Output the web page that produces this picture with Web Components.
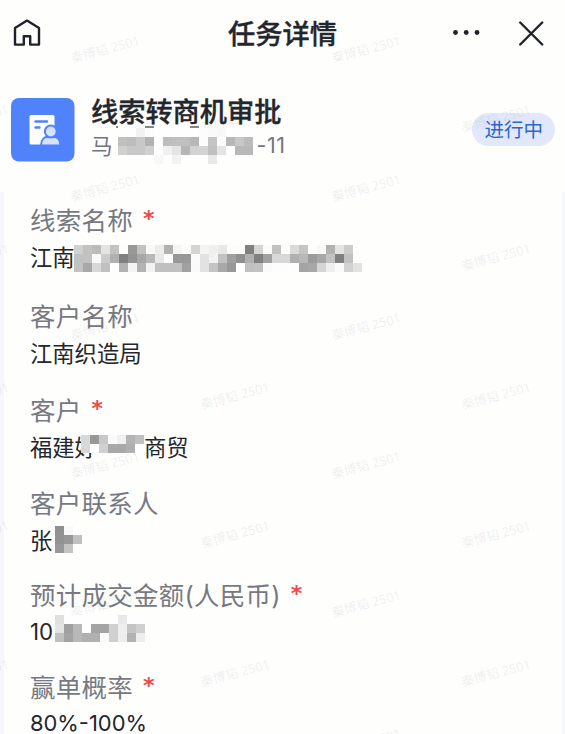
<!DOCTYPE html>
<html lang="zh-CN">
<head>
<meta charset="utf-8">
<title>任务详情</title>
<style>
  body {
    margin: 0;
    background: #fefefd;
    font-family: Inter, "Noto Sans CJK SC", sans-serif;
    color: #24262d;
  }
</style>
</head>
<body>
<task-page>
  <nav-bar slot="nav">任务详情</nav-bar>
  <task-summary slot="summary">
    线索转商机审批
    <span slot="sub">马</span>
    <pixel-mask slot="sub" style="margin: 3px 4px 0 5px" ticks="-2 27 72" rows="
      fe fe f2 fc fe fe fe fe fe fc fa f8 fe fe fe
      c0 bd c8 b2 fd bd c0 c0 b8 fc c4 fd b8 c8 bc
      d0 c8 c8 d0 fe f0 e4 b6 d2 d4 c0 e4 fe b8 b8
      fe fe fe fe f8 fe f2 fe fe fe e8 fe fe fe fe"></pixel-mask>
    <span slot="sub" style="letter-spacing: .5px">-11</span>
    <status-pill slot="status">进行中</status-pill>
  </task-summary>

  <form-field label="线索名称" required>
    江南<pixel-mask style="margin: 4px 0 0 -1px" rows="
      d2 c2 bb e4 c2 fd 98 c2 f8 ec b1 f5 fd d4 f4 f0 e8 fc fc 80 d5 fb c1 fc da c5 fe f8 b2 e4 cc fe
      c2 c2 f8 cc b2 80 94 a8 b8 e8 fc 98 98 fb e2 f2 c2 a0 90 b0 80 a0 d8 d8 b0 b8 9c a8 c2 80 c2 fe
      c2 a8 d8 c0 fe b2 f4 b2 f2 c0 c0 c0 a0 fa e2 c4 a8 98 fe c0 c2 fa fd fd fc a4 a8 d5 ee fa d2 e2"></pixel-mask>
  </form-field>
  <form-field label="客户名称">江南织造局</form-field>
  <form-field label="客户" required>
    福建好<pixel-mask style="margin: -4px 0 0 -16px" rows="
      d8 98 c8 fa f0 b4 c0
      d8 fe d0 a8 a8 b0 fe"></pixel-mask>商贸
  </form-field>
  <form-field label="客户联系人">
    张<pixel-mask style="margin-left: 3px" rows="
      90 f8 fe
      92 98 c0
      98 c4 fe"></pixel-mask>
  </form-field>
  <form-field label="预计成交金额(人民币)" required>
    10<pixel-mask style="margin: -5px 0 0 2px" rows="
      e0 fe fe fe fe fe fe e8 fe fe
      e4 a0 b8 fe a4 a4 d0 ee c4 d0
      c0 a4 b8 b0 b0 fa d0 ee b2 ee"></pixel-mask>
  </form-field>
  <form-field label="赢单概率" required><span style="font-size: 21.9px">80%-100%</span></form-field>
</task-page>

<script>
/** Attaches an open shadow root holding the given markup */
function render(el, html) {
  el.attachShadow({ mode: 'open' }).innerHTML = html;
}

/**
 * Page frame: bar, summary and the sheet with the fields
 */
class TaskPage extends HTMLElement {
  constructor() {
    super();
    render(this, `
    <style>
      :host {
        display: flex;
        flex-direction: column;
        position: relative;
        height: 734px;
        overflow: hidden;
      }

      .sheet {
        flex: 1;
        min-height: 0;
        overflow: hidden;
        box-sizing: border-box;
        padding: 10px 26px 0 26px;
        border: solid #f6f7fa;
        border-width: 0 3px 0 4.5px;
      }

      ::slotted(form-field) { height: 92px; }
      ::slotted(form-field:nth-of-type(1)) { height: 96px; }
      ::slotted(form-field:nth-of-type(2)) { height: 94px; }
      ::slotted(form-field:nth-of-type(3)) { height: 93px; }
    </style>
    <slot name="nav"></slot>
    <slot name="summary"></slot>
    <div class="sheet"><slot></slot></div>
    <water-mark text="秦博韬 2501"></water-mark>
    `);
  }
}

class NavBar extends HTMLElement {
  constructor() {
    super();
    render(this, `
    <style>
      :host {
        display: grid;
        grid-template-columns: 1fr auto 1fr;
        align-items: center;
        height: 65px;
        padding: 0 21px 1px 12px;
      }

      h1 {
        margin: 4px 0 0 9px;
        font-size: 27.3px;
        font-weight: 500;
        -webkit-text-stroke: .35px;
        line-height: 40px;
      }

      .actions {
        display: flex;
        justify-content: flex-end;
        align-items: center;
        gap: 37px;
      }

      svg {
        display: block;
        fill: none;
        stroke: #202229;
        stroke-width: 2.4;
        stroke-linejoin: round;
      }
    </style>
    <svg width="30" height="30" viewBox="0 0 30 30">
      <path d="M3 10 15 2.6 27 10V26.600H18.200V18.200H11.800V26.600H3Z"/>
    </svg>
    <h1><slot></slot></h1>
    <div class="actions">
      <svg width="28" height="8" viewBox="0 0 28 8">
        <g fill="#202229" stroke="none">
          <circle cx="2.5" cy="3.5" r="2.4"/>
          <circle cx="13.2" cy="3.5" r="2.4"/>
          <circle cx="24" cy="3.5" r="2.4"/>
        </g>
      </svg>
      <svg width="26" height="26" viewBox="0 0 26 26" stroke-linecap="round">
        <path d="M2.200 2.500 24.200 24.500M24.200 2.500 2.200 24.500"/>
      </svg>
    </div>
    `);
  }
}

class TaskSummary extends HTMLElement {
  constructor() {
    super();
    render(this, `
    <style>
      :host {
        display: flex;
        align-items: center;
        height: 126px;
        box-sizing: border-box;
        padding: 1px 10px 0 11px;
      }

      .app { flex: none; margin-right: 16px; }

      .text { flex: 1; }

      h2 {
        margin: 0;
        font-size: 27.2px;
        font-weight: 500;
        -webkit-text-stroke: .35px;
        line-height: 36px;
      }

      .sub {
        display: flex;
        align-items: center;
        height: 34px;
        margin-top: -3px;
        margin-bottom: 3px;
        font-size: 21.5px;
        color: #72747e;
      }
    </style>
    <svg class="app" width="64" height="64" viewBox="0 0 64 64">
      <rect width="63.5" height="63.5" rx="8" fill="#4f82fb"/>
      <path d="M20 17H42Q43.500 17 43.500 18.500V46.500H20Q18.500 46.500 18.500 45V18.500Q18.500 17 20 17Z" fill="#fff"/>
      <path d="M24.500 23.500H36M24.500 29.500H28.500" stroke="#4f82fb" stroke-width="2.400" stroke-linecap="round"/>
      <g fill="#d7e2ff" stroke="#4f82fb" stroke-width="2">
        <path d="M30 47.500C30 41.500 33.500 38.800 37 38.800H42.500C46.500 38.800 49.300 42 49.300 47.500Z"/>
        <circle cx="39.800" cy="33.500" r="5.900"/>
      </g>
    </svg>
    <div class="text">
      <h2><slot></slot></h2>
      <div class="sub"><slot name="sub"></slot></div>
    </div>
    <slot name="status"></slot>
    `);
  }
}

class StatusPill extends HTMLElement {
  constructor() {
    super();
    render(this, `
    <style>
      :host {
        display: block;
        height: 33px;
        padding: 0 12px;
        border-radius: 17px;
        background: #e1e8fc;
        color: #2c66ce;
        font-size: 19.500px;
        line-height: 35px;
      }
    </style>
    <slot></slot>
    `);
  }
}

/**
 * Label over value
 *
 * @property {string} label
 * @property {boolean} required - Adds the red asterisk
 */
class FormField extends HTMLElement {
  constructor() {
    super();
    const mark = this.hasAttribute('required') ? '<i>*</i>' : '';
    render(this, `
    <style>
      :host { display: block; }

      .label {
        display: flex;
        height: 32px;
        align-items: center;
        font-size: 25.5px;
        letter-spacing: .25px;
        color: #777982;
        white-space: nowrap;
      }

      .value {
        display: flex;
        align-items: center;
        height: 30px;
        margin-top: 7px;
        font-size: 22.3px;
        white-space: nowrap;
      }

      i {
        margin: 1px 0 0 10px;
        font: bold 22px "DejaVu Sans", sans-serif;
        color: #f04a48;
      }
    </style>
    <div class="label">${this.getAttribute('label')}${mark}</div>
    <div class="value"><slot></slot></div>
    `);
  }
}

/**
 * Mosaic over private text, 9px cells
 *
 * @property {string} rows  - One line per row, hex grey levels
 * @property {string} ticks - Left edges of the dark slivers above the mosaic
 */
class PixelMask extends HTMLElement {
  constructor() {
    super();
    const rows = this.getAttribute('rows').trim().split('\n').map(r => r.trim().split(/\s+/));
    const w = rows[0].length * 9;
    const h = rows.length * 9;
    let cells = '';
    rows.forEach((row, y) => row.forEach((g, x) => {
      cells += `<rect x="${x * 9}" y="${y * 9}" width="9" height="9" fill="#${g}${g}${g}"/>`;
    }));
    const ticks = this.getAttribute('ticks');
    if (ticks) ticks.split(' ').forEach(x => {
      cells += `<rect x="${x}" y="-2" width="${x < 0 ? 2 : 9}" height="2" fill="#85868b"/>`;
    });
    render(this, `
    <style>
      :host { display: block; flex: none; position: relative; z-index: 1; }
      svg { display: block; overflow: visible; shape-rendering: crispEdges; }
    </style>
    <svg width="${w}" height="${h}">${cells}</svg>
    `);
  }
}

/**
 * Slanted name repeated over the whole page, every other row shifted
 */
class WaterMark extends HTMLElement {
  constructor() {
    super();
    let marks = '';
    for (let row = 0; row < 11; row++) {
      const y = 49 + row * 69.3;
      for (let x = row % 2 ? -26 : 105; x < 600; x += 261) {
        marks += `<text transform="translate(${x} ${y}) rotate(-15)" y="5">${this.getAttribute('text')}</text>`;
      }
    }
    render(this, `
    <style>
      :host {
        position: absolute;
        inset: 0;
        pointer-events: none;
      }

      text {
        font: 12.8px "Noto Sans", "Noto Sans CJK SC", sans-serif;
        text-anchor: middle;
        fill: rgba(60, 62, 75, .09);
      }
    </style>
    <svg width="565" height="734">${marks}</svg>
    `);
  }
}

customElements.define('pixel-mask', PixelMask);
customElements.define('water-mark', WaterMark);
customElements.define('status-pill', StatusPill);
customElements.define('form-field', FormField);
customElements.define('nav-bar', NavBar);
customElements.define('task-summary', TaskSummary);
customElements.define('task-page', TaskPage);
</script>
</body>
</html>
